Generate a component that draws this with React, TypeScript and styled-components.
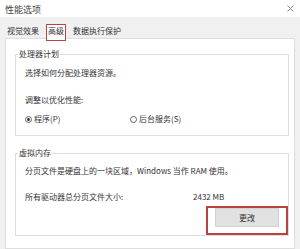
import React from "react";
import styled, { createGlobalStyle } from "styled-components";

const GlobalStyle = createGlobalStyle`
  html, body {
    margin: 0;
    padding: 0;
    background: #ffffff;
  }
  body {
    font-family: "Noto Sans CJK SC", "Noto Sans", sans-serif;
    color: #333;
  }
`;

const Window = styled.div`
  width: 300px;
  height: 249px;
  overflow: hidden;
  display: flex;
  flex-direction: column;
  background: #f0f0f0;
`;

const TitleBar = styled.div`
  height: 17px;
  flex: none;
  background: #fff;
  display: flex;
  align-items: flex-start;
  justify-content: space-between;
  padding: 3px 6px 0 5px;
  box-sizing: border-box;
`;

const Title = styled.div`
  font-size: 9px;
  line-height: 13px;
  color: #444;
`;

const CloseIcon = styled.svg`
  width: 7px;
  height: 7px;
  margin-top: 2px;
`;

const TabStrip = styled.div`
  height: 21px;
  flex: none;
  display: flex;
  align-items: flex-end;
  gap: 4px;
  padding: 0 4px;
`;

const Tab = styled.div<{ $active?: boolean }>`
  position: relative;
  font-size: 8px;
  white-space: nowrap;
  color: #333;
  box-sizing: border-box;
  ${({ $active }) =>
    $active
      ? `
    height: 17px;
    line-height: 12px;
    padding: 0 1px;
    margin-bottom: -3px;
    background: #fff;
    border: 1px solid #b8433f;
  `
      : `
    height: 14px;
    line-height: 14px;
    padding: 0 3px;
  `}
`;

const Panel = styled.div`
  flex: 1;
  margin: 0 5px;
  background: #fff;
  border: 1px solid #dedede;
  padding: 9px 5px 0 9px;
`;

const Group = styled.fieldset<{ $gap?: number }>`
  margin: ${({ $gap }) => $gap ?? 0}px 0 0 0;
  padding: 0;
  min-width: 0;
  border: 1px solid #dddddd;
`;

const Legend = styled.legend`
  font-size: 8px;
  line-height: 12px;
  padding: 0 1px;
  margin-left: 2px;
  color: #333;
`;

const GroupBody = styled.div<{ $pt: number; $pb: number }>`
  padding: ${({ $pt }) => $pt}px 0 ${({ $pb }) => $pb}px 9px;
  display: flex;
  flex-direction: column;
`;

const Line = styled.div<{ $mt?: number }>`
  font-size: 8px;
  line-height: 12px;
  margin-top: ${({ $mt }) => $mt ?? 0}px;
  white-space: nowrap;
  color: #333;
`;

const RadioGroup = styled.div`
  display: grid;
  grid-template-columns: 105px auto;
  margin-top: 7px;
`;

const RadioOption = styled.label`
  display: flex;
  align-items: center;
  gap: 2px;
  font-size: 8px;
  line-height: 12px;
  color: #333;
`;

const RadioDot = styled.span<{ $checked?: boolean }>`
  width: 7px;
  height: 7px;
  box-sizing: border-box;
  border-radius: 50%;
  border: 1px solid #666;
  display: flex;
  align-items: center;
  justify-content: center;
  &::after {
    content: "";
    width: 3px;
    height: 3px;
    border-radius: 50%;
    background: ${({ $checked }) => ($checked ? "#333" : "transparent")};
  }
`;

const InfoRow = styled.div`
  display: grid;
  grid-template-columns: 168px auto;
  margin-top: 14px;
  font-size: 8px;
  line-height: 12px;
  color: #333;
`;

const ButtonRow = styled.div`
  display: flex;
  justify-content: flex-end;
  margin-top: 3px;
`;

const Highlight = styled.div`
  border: 2px solid #b8433f;
  padding: 0 7px 6px 7px;
`;

const ChangeButton = styled.button`
  width: 64px;
  height: 19px;
  margin: 0;
  padding: 0;
  background: #e1e1e1;
  border: 1px solid #d2d2d2;
  font-family: inherit;
  font-size: 8px;
  color: #333;
  display: block;
`;

const App: React.FC = () => {
  return (
    <Window>
      <GlobalStyle />
      <TitleBar>
        <Title>性能选项</Title>
        <CloseIcon viewBox="0 0 7 7">
          <path d="M0.5 0.5 L6.5 6.5 M6.5 0.5 L0.5 6.5" stroke="#8a8a8a" strokeWidth="1" />
        </CloseIcon>
      </TitleBar>
      <TabStrip>
        <Tab>视觉效果</Tab>
        <Tab $active>高级</Tab>
        <Tab>数据执行保护</Tab>
      </TabStrip>
      <Panel>
        <Group>
          <Legend>处理器计划</Legend>
          <GroupBody $pt={7} $pb={10}>
            <Line>选择如何分配处理器资源。</Line>
            <Line $mt={15}>调整以优化性能:</Line>
            <RadioGroup>
              <RadioOption>
                <RadioDot $checked />
                程序(P)
              </RadioOption>
              <RadioOption>
                <RadioDot />
                后台服务(S)
              </RadioOption>
            </RadioGroup>
          </GroupBody>
        </Group>
        <Group $gap={11}>
          <Legend>虚拟内存</Legend>
          <GroupBody $pt={6} $pb={0}>
            <Line>分页文件是硬盘上的一块区域，Windows 当作 RAM 使用。</Line>
            <InfoRow>
              <span>所有驱动器总分页文件大小:</span>
              <span>2432 MB</span>
            </InfoRow>
            <ButtonRow>
              <Highlight>
                <ChangeButton>更改</ChangeButton>
              </Highlight>
            </ButtonRow>
          </GroupBody>
        </Group>
      </Panel>
    </Window>
  );
};

export default App;
